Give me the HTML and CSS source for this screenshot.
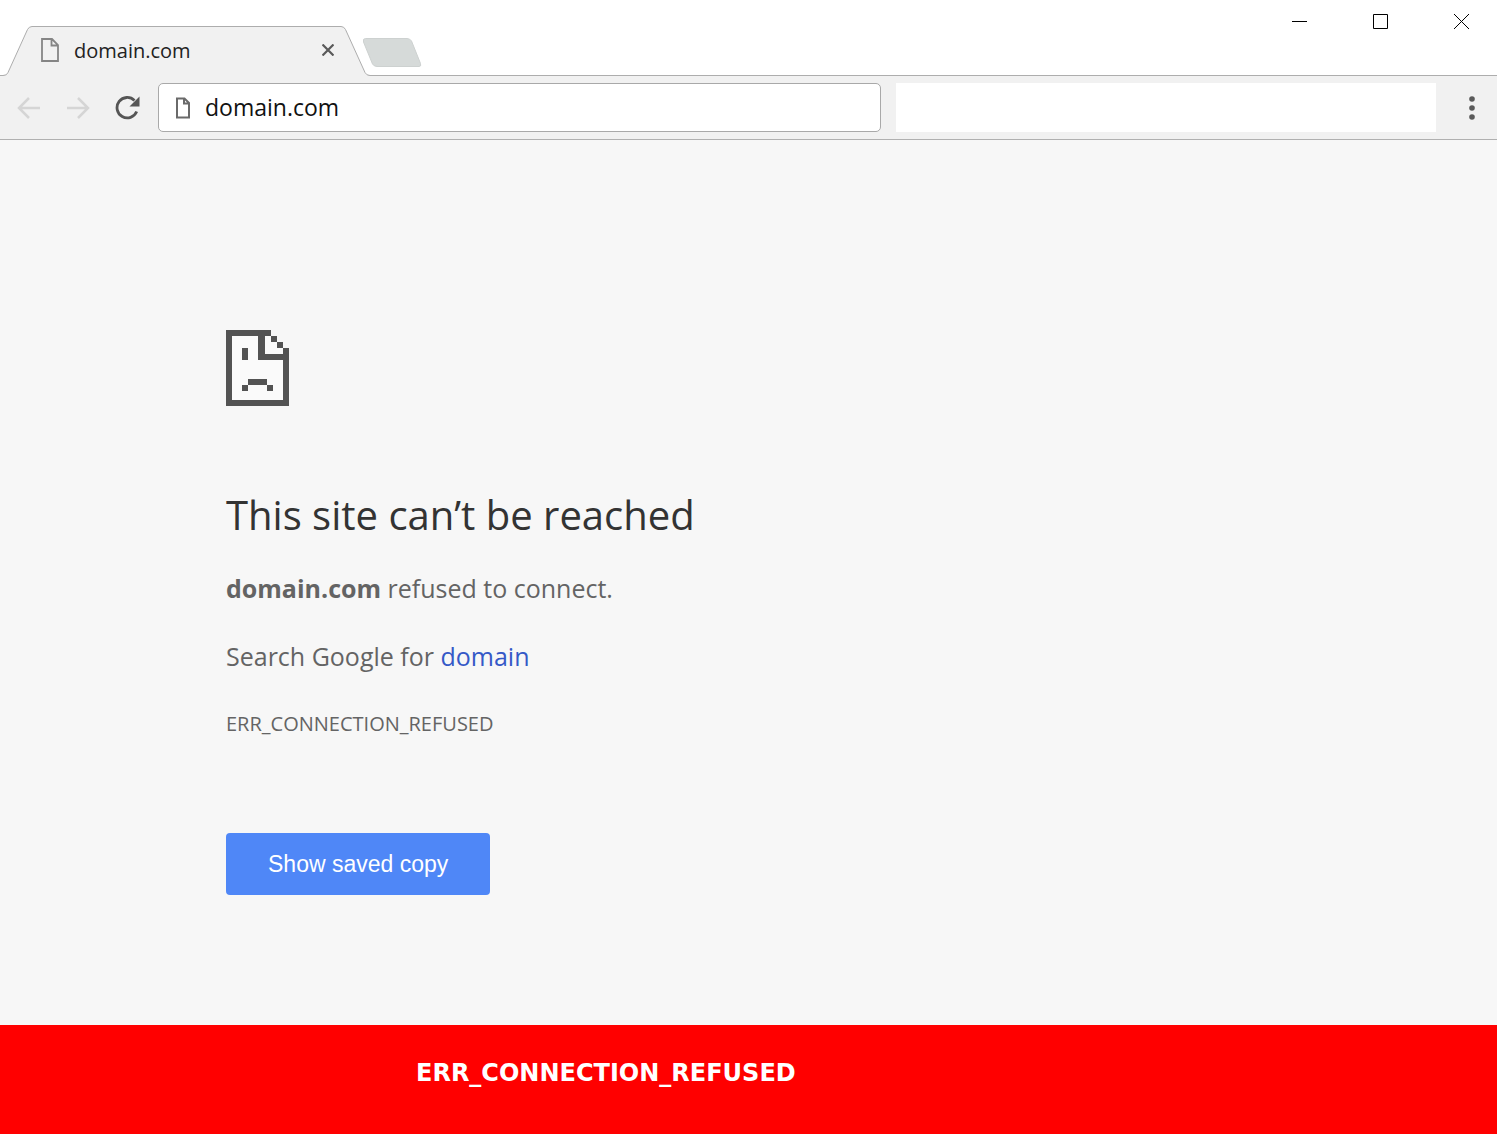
FILE: index.html
```html
<!DOCTYPE html>
<html lang="en">
<head>
    <meta charset="UTF-8">
    <title>domain.com</title>
    <link rel="stylesheet" href="styles.css">
</head>
<body>
    <header class="titlebar">
        <div class="tab">
            <svg class="tab-shape" viewBox="0 0 376 50" width="376" height="50">
                <path d="M0 49.500H3Q7 49.500 8 46.500L27.500 3.500Q29 .5 32 .5H341Q344 .5 345.500 3.500L365 46.500Q366.500 49.500 370 49.500H376V50H0Z" fill="#f1f1f1"/>
                <path d="M0 49.500H3Q7 49.500 8 46.500L27.500 3.500Q29 .5 32 .5H341Q344 .5 345.500 3.500L365 46.500Q366.500 49.500 370 49.500H376" fill="none" stroke="#adadad"/>
            </svg>
            <svg class="tab-icon" viewBox="0 0 18 24" width="18" height="24">
                <path d="M1 1H11L17 7V23H1ZM10.500 1V7.500H17" fill="none" stroke="#858585" stroke-width="1.800"/>
            </svg>
            <span class="tab-title">domain.com</span>
            <button class="icon-btn tab-close" aria-label="Close tab">
                <svg viewBox="0 0 12 12" width="12" height="12"><path d="M.5.5L11.500 11.500M11.500.5L.5 11.500" stroke="#5a5a5a" stroke-width="2.200"/></svg>
            </button>
        </div>
        <button class="icon-btn new-tab" aria-label="New tab">
            <svg viewBox="0 0 60 30" width="60" height="30"><path d="M3.500.5H45Q48 .5 49.500 3L58.500 25.500Q59.500 28.500 57 28.500H15Q12 28.500 10.500 26L1.500 4Q.5.5 3.500.5Z" fill="#d6dad9" stroke="#cdd1d0"/></svg>
        </button>
        <div class="window-buttons">
            <button class="icon-btn" aria-label="Minimize">
                <svg viewBox="0 0 15 15" width="15" height="15"><path d="M0 7.500H15" stroke="#000"/></svg>
            </button>
            <button class="icon-btn" aria-label="Maximize">
                <svg viewBox="0 0 15 15" width="15" height="15"><path d="M.5.5H14.500V14.500H.5Z" fill="none" stroke="#000"/></svg>
            </button>
            <button class="icon-btn" aria-label="Close">
                <svg viewBox="0 0 15 15" width="15" height="15"><path d="M0 0L15 15M15 0L0 15" stroke="#000"/></svg>
            </button>
        </div>
    </header>

    <nav class="toolbar">
        <div class="nav-buttons">
            <button class="icon-btn" aria-label="Back">
                <svg viewBox="0 0 24 24" width="24" height="24"><path d="M23 12H2.500M12 2L2 12L12 22" fill="none" stroke="#d5d5d5" stroke-width="2.500"/></svg>
            </button>
            <button class="icon-btn" aria-label="Forward">
                <svg viewBox="0 0 24 24" width="24" height="24"><path d="M1 12H21.500M12 2L22 12L12 22" fill="none" stroke="#d5d5d5" stroke-width="2.500"/></svg>
            </button>
            <button class="icon-btn" aria-label="Reload">
                <svg viewBox="0 0 25 24" width="25" height="24"><path d="M19.500 4.500A10.200 10.200 0 1 0 21.700 15.500" fill="none" stroke="#555" stroke-width="2.800"/><path d="M24.500 .5V10.500H14.500Z" fill="#555"/></svg>
            </button>
        </div>
        <div class="omnibox">
            <svg viewBox="0 0 16 22" width="16" height="22">
                <path d="M2 1.500H9.500L14 6V20.500H2ZM9 1.500V6.500H14" fill="none" stroke="#6a6a6a" stroke-width="2"/>
            </svg>
            <input class="address" type="text" value="domain.com" aria-label="Address">
        </div>
        <div class="extensions"></div>
        <button class="icon-btn menu" aria-label="Menu">
            <svg viewBox="0 0 6 24" width="6" height="24" fill="#5a5a5a"><circle cx="3" cy="3" r="2.800"/><circle cx="3" cy="12" r="2.800"/><circle cx="3" cy="21" r="2.800"/></svg>
        </button>
    </nav>

    <main class="error-page">
        <svg class="sad-page" viewBox="0 0 63 76" width="63" height="76" shape-rendering="crispEdges">
            <path d="M3 3H45V6H51V12H57V18H60V73H3Z" fill="#fafafa"/>
            <path d="M0 0H45V6H51V12H57V18H63V76H0ZM6 6V70H57V30H32V6ZM39 6V24H57V18H51V12H45V6Z" fill="#535353" fill-rule="evenodd"/>
            <path d="M16 18H22V30H16ZM22 49H41V55H47V61H41V55H22V61H16V55H22Z" fill="#535353"/>
        </svg>
        <h1>This site can’t be reached</h1>
        <p><strong>domain.com</strong> refused to connect.</p>
        <p>Search Google for <a href="#">domain</a></p>
        <p class="error-code">ERR_CONNECTION_REFUSED</p>
        <button class="saved-copy">Show saved copy</button>
    </main>

    <footer class="banner">ERR_CONNECTION_REFUSED</footer>
</body>
</html>
```

FILE: styles.css
```css
* {
    box-sizing: border-box;
}
body {
    margin: 0;
    min-height: 100vh;
    display: flex;
    flex-direction: column;
    background-color: #f7f7f7;
    font-family: "Open Sans", "Noto Sans", sans-serif;
}
.icon-btn {
    display: flex;
    padding: 0;
    border: 0;
    background: none;
    cursor: pointer;
}

/* Title bar */
.titlebar {
    display: flex;
    height: 76px;
    padding-top: 26px;
    background-color: #fff;
    border-bottom: 1px solid #adadad;
}
.tab {
    position: relative;
    display: flex;
    align-items: center;
    width: 362px;
    height: 50px;
    padding: 0 28px 2px 41px;
}
.tab-shape {
    position: absolute;
    top: 0;
    left: 0;
}
.tab-icon,
.tab-title,
.tab-close {
    position: relative;
}
.tab-title {
    flex: 1;
    margin-left: 15px;
    font-size: 20px;
    color: #222;
}
.new-tab {
    position: relative;
    align-self: flex-start;
    margin-top: 12px;
}
.window-buttons {
    display: flex;
    align-self: flex-start;
    gap: 66px;
    margin-top: -12px;
    margin-left: auto;
    padding-right: 28px;
}

/* Toolbar */
.toolbar {
    display: flex;
    align-items: center;
    padding: 7px 22px 7px 17px;
    background-color: #f1f1f1;
    border-bottom: 1px solid #b0b0b0;
}
.nav-buttons {
    display: flex;
    gap: 25px;
    margin-right: 18px;
}
.omnibox {
    flex: 689 1 0;
    display: flex;
    align-items: center;
    height: 49px;
    padding: 0 16px;
    background-color: #fff;
    border: 1px solid #a9a9a9;
    border-radius: 5px;
}
.address {
    flex: 1;
    min-width: 0;
    margin-left: 14px;
    padding: 0 0 2px;
    border: 0;
    outline: 0;
    font-family: inherit;
    font-size: 23px;
    color: #111;
}
.extensions {
    flex: 540 1 0;
    height: 49px;
    margin: 0 33px 0 15px;
    background-color: #fff;
}

/* Error page */
.error-page {
    flex: 1;
    padding: 190px 40px 60px 226px;
    color: #646464;
}
.sad-page {
    display: block;
}
h1 {
    margin: 79px 0 23px;
    font-size: 40px;
    font-weight: 400;
    line-height: 60px;
    color: #333;
}
p {
    margin: 0 0 28px;
    font-size: 25px;
    line-height: 40px;
}
a {
    color: #3559c7;
    text-decoration: none;
}
.error-code {
    margin-bottom: 89px;
    font-size: 20px;
}
.saved-copy {
    padding: 17px 42px;
    border: 0;
    border-radius: 4px;
    background-color: #4f87f7;
    color: #fff;
    font-family: "Liberation Sans", Arial, sans-serif;
    font-size: 23px;
    line-height: 28px;
    cursor: pointer;
}

.banner {
    padding: 32px 20px 45px 416px;
    background-color: #f00;
    color: #fff;
    font-family: "DejaVu Sans", Verdana, sans-serif;
    font-size: 24px;
    font-weight: 700;
    line-height: 32px;
}
```
